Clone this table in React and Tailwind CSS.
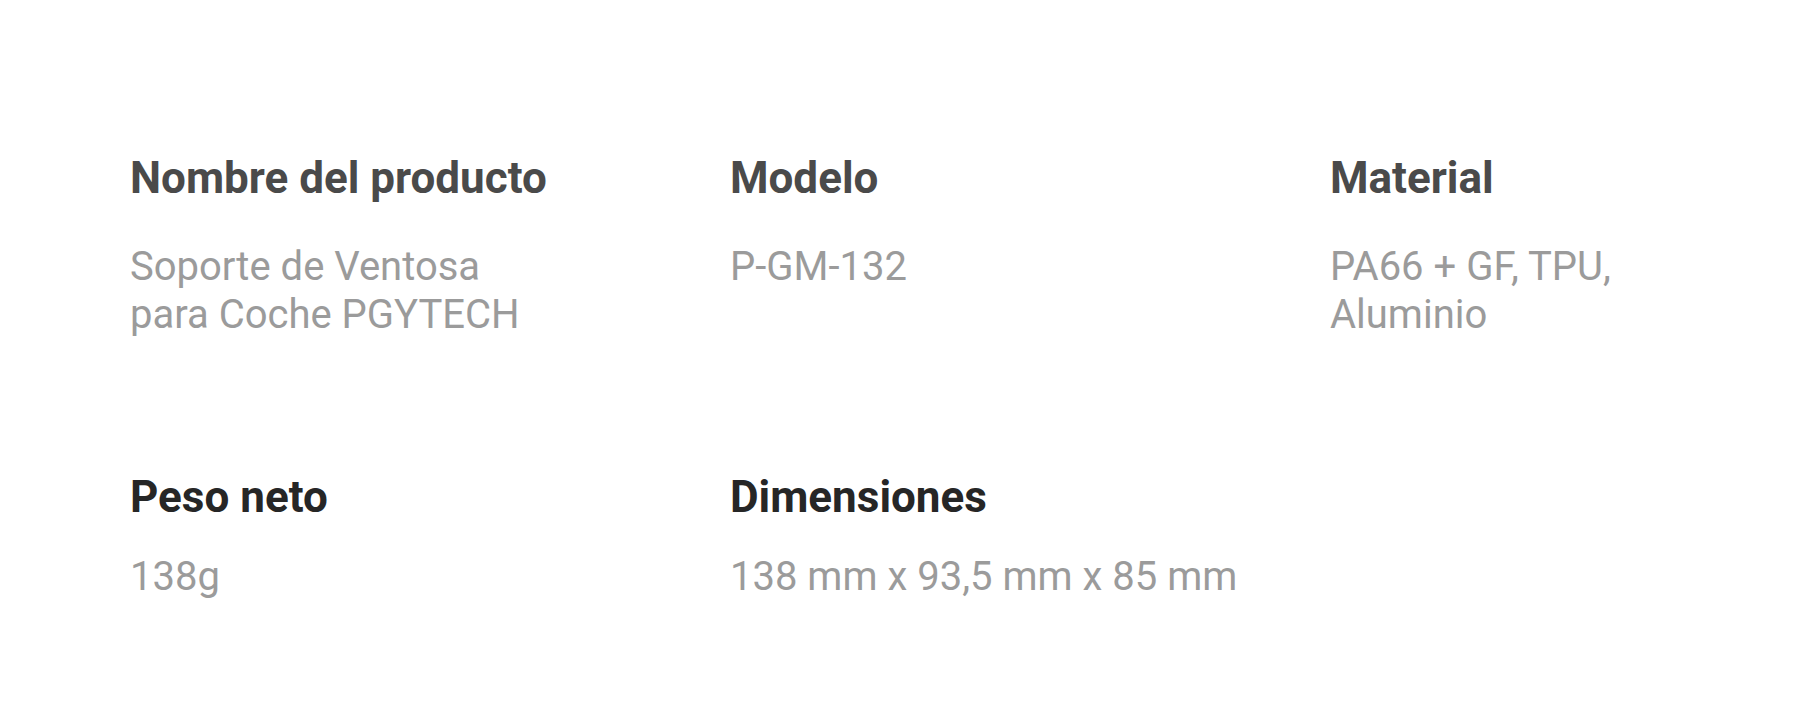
import React from "react";

const row1 = [
  { t: "Nombre del producto", v: ["Soporte de Ventosa", "para Coche PGYTECH"] },
  { t: "Modelo", v: ["P-GM-132"] },
  { t: "Material", v: ["PA66 + GF, TPU,", "Aluminio"] },
];
const row2 = [
  { t: "Peso neto", v: ["138g"] },
  { t: "Dimensiones", v: ["138 mm x 93,5 mm x 85 mm"] },
];

export default function App() {
  return (
    <div className="w-full h-[718px] overflow-hidden bg-white font-['Roboto',sans-serif] pt-[152px] pl-[130px]">
      <div className="grid grid-cols-[600px_600px_1fr]">
        {row1.map((it) => (
          <div key={it.t}>
            <h3 className="text-[44px] leading-[52px] font-bold text-[#4a4a4a]">{it.t}</h3>
            <p className="mt-[39px] text-[40px] leading-[48px] text-[#9b9b9b]">
              {it.v.map((l, i) => (
                <React.Fragment key={i}>
                  {l}
                  {i < it.v.length - 1 && <br />}
                </React.Fragment>
              ))}
            </p>
          </div>
        ))}
      </div>
      <div className="grid grid-cols-[600px_600px_1fr] mt-[132px]">
        {row2.map((it) => (
          <div key={it.t}>
            <h3 className="text-[44px] leading-[52px] font-bold text-[#262626]">{it.t}</h3>
            <p className="mt-[30px] text-[40px] leading-[48px] text-[#9b9b9b]">{it.v[0]}</p>
          </div>
        ))}
      </div>
    </div>
  );
}
